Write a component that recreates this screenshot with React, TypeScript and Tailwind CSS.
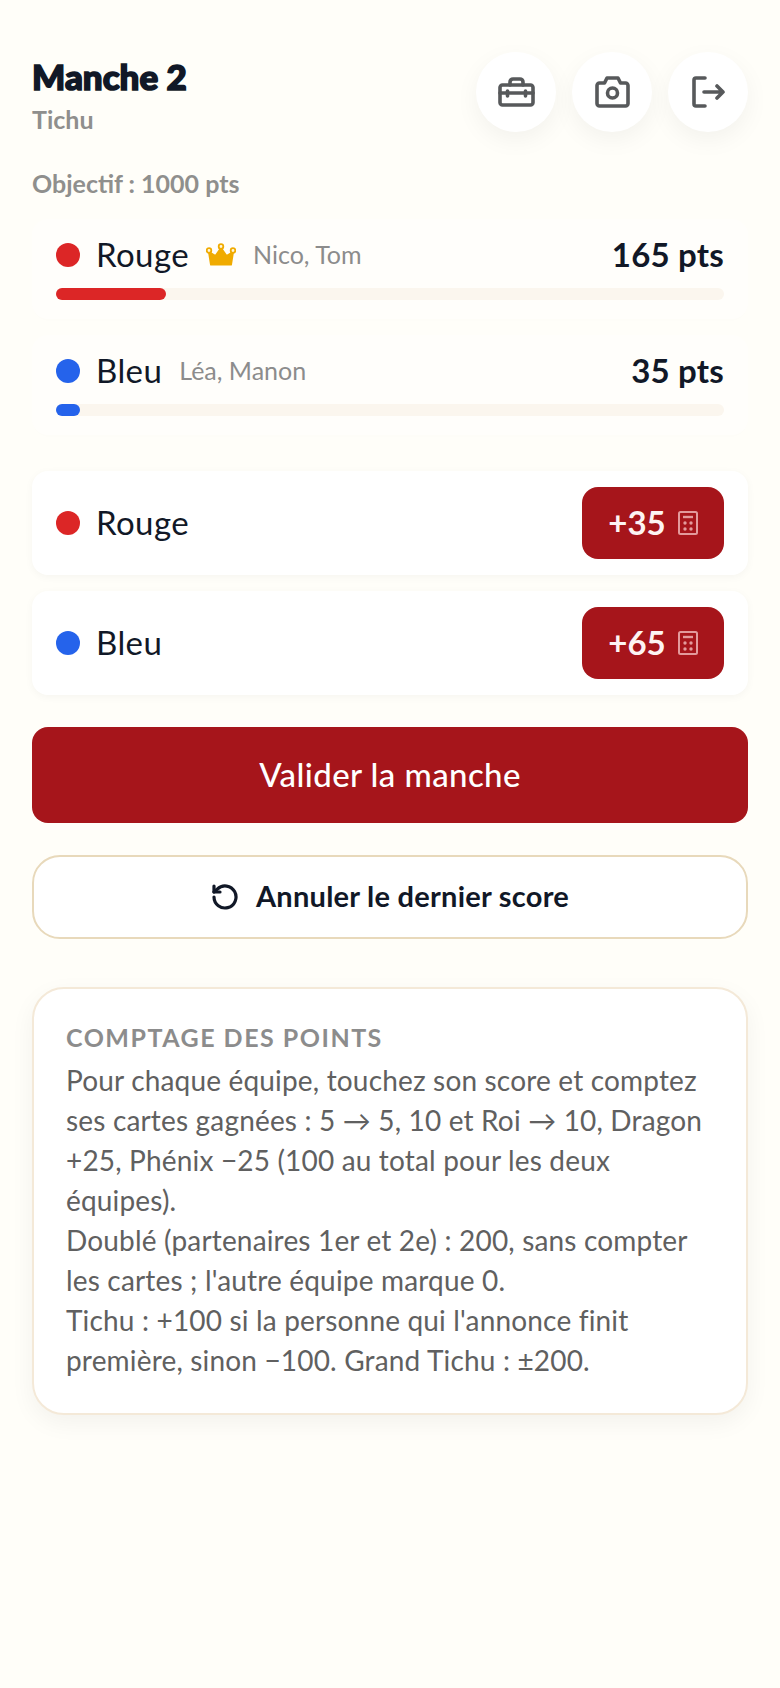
function Dot({ color }: { color: string }) {
  return <span className={`w-6 h-6 rounded-full shrink-0 ${color}`} />;
}

function Crown() {
  return (
    <svg width="30" height="24" viewBox="0 0 30 24" className="shrink-0">
      <path d="M5 21.500 L3 9 L9.500 13 L15 5 L20.500 13 L27 9 L25 21.500 Z" fill="#f0ab00" stroke="#f0ab00" strokeWidth="2" strokeLinejoin="round" />
      <circle cx="15" cy="3.500" r="2.300" fill="#fff6dc" stroke="#f0ab00" strokeWidth="1.800" />
      <circle cx="3" cy="7.500" r="2.300" fill="#fff6dc" stroke="#f0ab00" strokeWidth="1.800" />
      <circle cx="27" cy="7.500" r="2.300" fill="#fff6dc" stroke="#f0ab00" strokeWidth="1.800" />
    </svg>
  );
}

function ToolboxIcon() {
  return (
    <svg width="37" height="30" viewBox="0 0 37 30" fill="none" stroke="#57595b" strokeWidth="3.6" strokeLinecap="round" strokeLinejoin="round">
      <rect x="2" y="8" width="33" height="20" rx="2.500" />
      <path d="M12 8V5a3 3 0 0 1 3-3h7a3 3 0 0 1 3 3v3" />
      <path d="M2 16h33" />
      <path d="M9.500 14v5M27.500 14v5" />
    </svg>
  );
}

function CameraIcon() {
  return (
    <svg width="35" height="32" viewBox="0 0 35 32" fill="none" stroke="#57595b" strokeWidth="3.600" strokeLinecap="round" strokeLinejoin="round">
      <path d="M4.500 7h5l2.500-5h11l2.500 5h5a2.500 2.500 0 0 1 2.500 2.500v18a2.500 2.500 0 0 1-2.500 2.500h-26a2.500 2.500 0 0 1-2.500-2.500v-18a2.500 2.500 0 0 1 2.500-2.500z" />
      <circle cx="17.500" cy="17" r="5" />
    </svg>
  );
}

function ExitIcon() {
  return (
    <svg width="33" height="32" viewBox="0 0 33 32" fill="none" stroke="#57595b" strokeWidth="3.600" strokeLinecap="round" strokeLinejoin="round">
      <path d="M13 2H4a2 2 0 0 0-2 2v24a2 2 0 0 0 2 2h9" />
      <path d="M12 16h19M25 10l6 6-6 6" />
    </svg>
  );
}

function CalcIcon() {
  return (
    <svg width="20" height="24" viewBox="0 0 20 24" fill="none" stroke="#e39a9c" strokeWidth="2">
      <rect x="1" y="1" width="18" height="22" rx="1.500" />
      <path d="M5 6h10" strokeWidth="2.400" />
      <g fill="#e39a9c" stroke="none">
        <circle cx="7" cy="12" r="1.700" />
        <circle cx="13" cy="12" r="1.700" />
        <circle cx="7" cy="18" r="1.700" />
        <circle cx="13" cy="18" r="1.700" />
      </g>
    </svg>
  );
}

function UndoIcon() {
  return (
    <svg width="28" height="28" viewBox="0 0 28 28" fill="none" stroke="#111827" strokeWidth="3.2" strokeLinecap="round" strokeLinejoin="round">
      <path d="M3 14a11 11 0 1 0 3.400-8L3 9" />
      <path d="M3 3v6h6" />
    </svg>
  );
}

function RoundButton({ children }: { children: React.ReactNode }) {
  return (
    <div className="w-20 h-20 rounded-full bg-white flex items-center justify-center shadow-[0_8px_24px_rgba(0,0,0,0.05)]">
      {children}
    </div>
  );
}

function ScoreCard({ color, name, crown, players, points, width }: { color: string; name: string; crown?: boolean; players: string; points: string; width: number }) {
  return (
    <div className="rounded-2xl bg-[#fffefb] px-6 pt-4 pb-[19px] shadow-[0_2px_8px_rgba(0,0,0,0.006)]">
      <div className="flex items-center h-10">
        <Dot color={color} />
        <span className="ml-4 text-[33px] tracking-[0.4px] text-[#111827]">{name}</span>
        {crown && <span className="ml-[17px] flex"><Crown /></span>}
        <span className="ml-[17px] text-[25px] text-[#8c8c8c]">{players}</span>
        <span className="ml-auto text-[33px] font-bold tracking-[0.2px] text-[#111827]">{points}</span>
      </div>
      <div className="mt-[13px] h-3 rounded-full bg-[#fbf6ee]">
        <div className={`h-full rounded-full ${color}`} style={{ width }} />
      </div>
    </div>
  );
}

function EntryRow({ color, name, score }: { color: string; name: string; score: string }) {
  return (
    <div className="h-[104px] rounded-2xl bg-white px-6 flex items-center shadow-[0_2px_8px_rgba(0,0,0,0.04)]">
      <Dot color={color} />
      <span className="ml-4 text-[33px] tracking-[0.4px] text-[#111827]">{name}</span>
      <div className="ml-auto w-[142px] h-[72px] rounded-2xl bg-[#a6151b] flex items-center justify-center gap-3">
        <span className="text-[33px] font-bold text-[#fdf3f3]">{score}</span>
        <CalcIcon />
      </div>
    </div>
  );
}

export default function App() {
  return (
    <div className="min-h-[1688px] bg-[#fffef9] px-8 pt-[52px] font-['Lato',sans-serif]">
      <div className="flex justify-between">
        <div>
          <h1 className="font-black text-[35px] leading-[48px] text-[#111827] [-webkit-text-stroke:1.6px_#111827]">Manche 2</h1>
          <p className="mt-[1px] text-[25px] font-bold text-[#8f8f8d] leading-[36px]">Tichu</p>
        </div>
        <div className="flex gap-4">
          <RoundButton><ToolboxIcon /></RoundButton>
          <RoundButton><CameraIcon /></RoundButton>
          <RoundButton><ExitIcon /></RoundButton>
        </div>
      </div>
      <p className="mt-[28px] text-[25px] font-bold text-[#8f8f8d] leading-[36px]">Objectif : 1000 pts</p>
      <div className="mt-[18px] flex flex-col gap-4">
        <ScoreCard color="bg-[#dc2626]" name="Rouge" crown players="Nico, Tom" points="165 pts" width={110} />
        <ScoreCard color="bg-[#2563eb]" name="Bleu" players="Léa, Manon" points="35 pts" width={24} />
      </div>
      <div className="mt-[36px] flex flex-col gap-4">
        <EntryRow color="bg-[#dc2626]" name="Rouge" score="+35" />
        <EntryRow color="bg-[#2563eb]" name="Bleu" score="+65" />
      </div>
      <button className="mt-8 w-full h-24 rounded-2xl bg-[#a6151b] text-white text-[33px] font-medium tracking-[0.4px]">Valider la manche</button>
      <button className="mt-8 w-full h-[84px] rounded-[28px] bg-white border-2 border-[#e8d9bb] flex items-center justify-center gap-[17px] text-[#111827] text-[29px] font-bold tracking-[0.25px]">
        <UndoIcon />
        <span className="-mt-[2px]">Annuler le dernier score</span>
      </button>
      <div className="mt-[48px] rounded-[32px] bg-white border-2 border-[#f4e9d8] px-8 pt-[30px] pb-[33px] shadow-[0_8px_24px_rgba(0,0,0,0.05)]">
        <p className="text-[25px] font-bold tracking-[1.500px] text-[#8c8c8c] leading-[36px]">COMPTAGE DES POINTS</p>
        <p className="mt-[5px] text-[28px] tracking-[0.17px] leading-[40px] text-[#606060]">
          Pour chaque équipe, touchez son score et comptez ses cartes gagnées : 5 → 5, 10 et Roi → 10, Dragon +25, Phénix −25 (100 au total pour les deux équipes).
          <br />
          Doublé (partenaires 1er et 2e) : 200, sans compter les cartes ; l'autre équipe marque 0.
          <br />
          Tichu : +100 si la personne qui l'annonce finit première, sinon −100. Grand Tichu : ±200.
        </p>
      </div>
    </div>
  );
}
